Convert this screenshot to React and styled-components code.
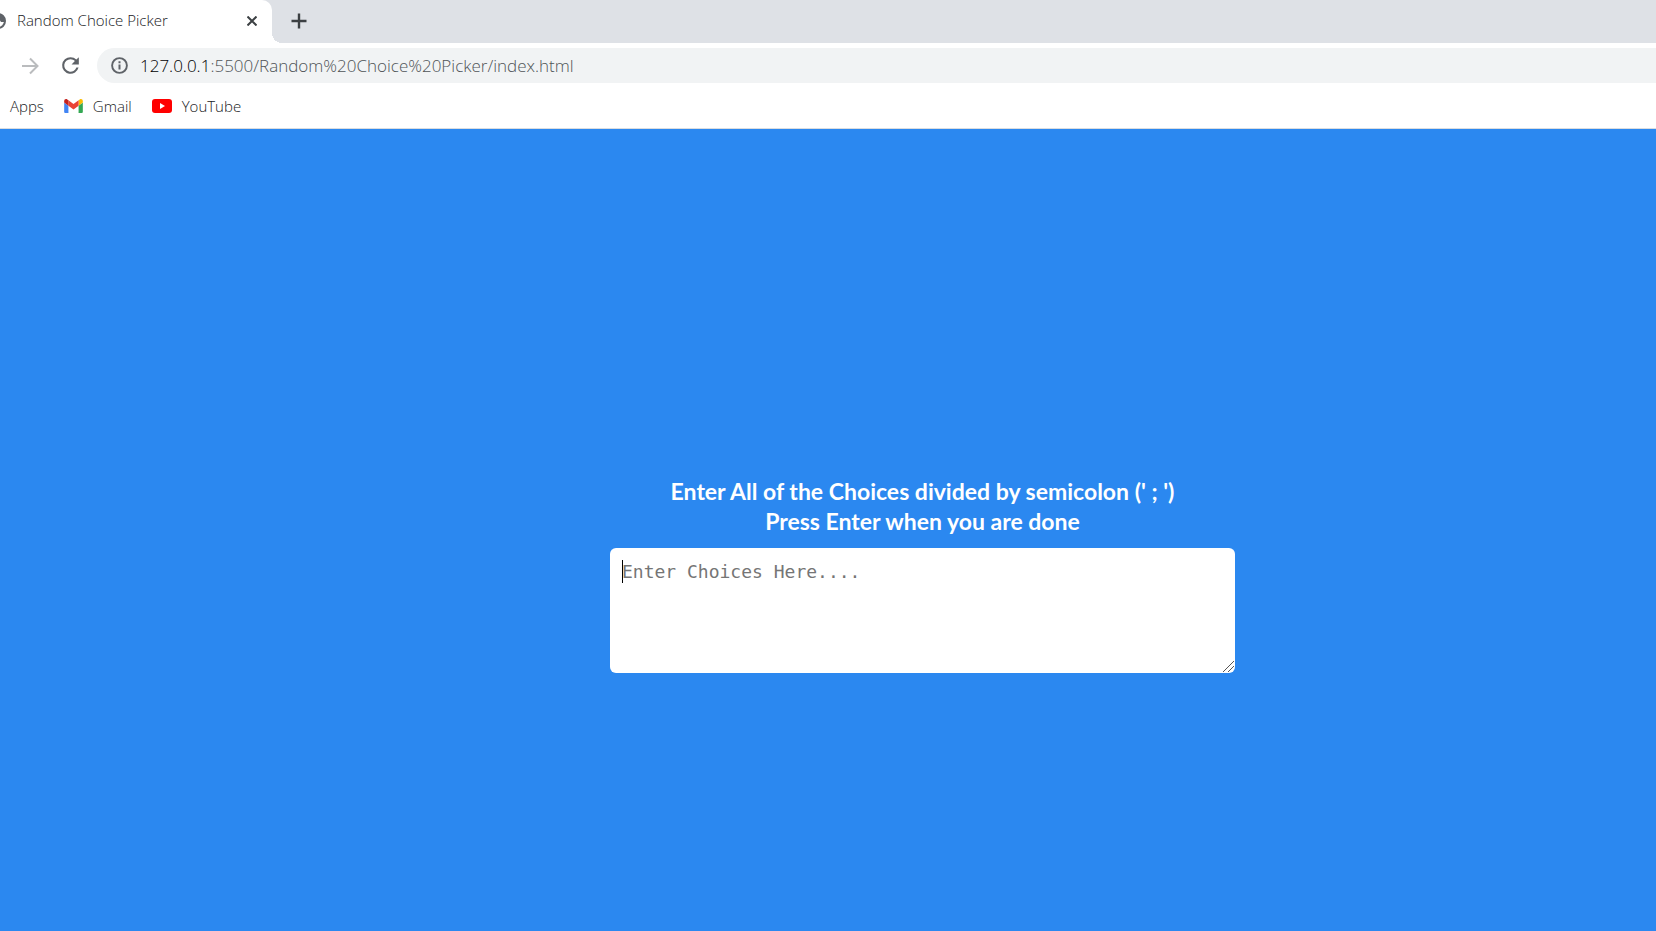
import React from "react";
import styled, { createGlobalStyle } from "styled-components";

const GlobalStyle = createGlobalStyle`
  *, *::before, *::after { box-sizing: border-box; }
  body {
    margin: 0;
    font-family: "Open Sans", "Noto Sans", sans-serif;
    color: #3c4043;
  }
  button, input { font: inherit; color: inherit; }
`;

const Window = styled.div`
  display: flex;
  flex-direction: column;
  min-height: 100vh;
  overflow: hidden;
  background: #fff;
`;

const TabStrip = styled.div`
  display: flex;
  align-items: center;
  height: 43px;
  padding-bottom: 1px;
  background: #dee1e6;
`;

const Tab = styled.div`
  position: relative;
  display: flex;
  align-items: center;
  align-self: flex-start;
  width: 272px;
  height: 43px;
  padding: 0 12px 1px 0;
  background: #fff;
  border-top-right-radius: 10px;

  &::after {
    content: "";
    position: absolute;
    left: 100%;
    bottom: 0;
    width: 10px;
    height: 10px;
    background: radial-gradient(circle at 100% 0, transparent 10px, #fff 10px);
  }
`;

const TabTitle = styled.span`
  flex: 1;
  padding: 0 0 2px 11px;
  font-size: 15px;
  font-weight: 300;
  line-height: 20px;
  color: #202124;
  white-space: nowrap;
`;

const IconButton = styled.button`
  display: flex;
  align-items: center;
  justify-content: center;
  flex: none;
  width: ${(p) => p.$size}px;
  height: ${(p) => p.$size}px;
  padding: 0;
  border: 0;
  border-radius: 50%;
  background: transparent;
  color: ${(p) => p.$tone || "#3c4043"};
`;

const NewTab = styled(IconButton)`
  margin-left: 13px;
`;

const Toolbar = styled.div`
  display: flex;
  align-items: center;
  gap: 8px;
  height: 45px;
  padding-left: 14px;
`;

const AddressBar = styled.div`
  display: flex;
  flex: 1;
  align-items: center;
  gap: 12px;
  height: 35px;
  margin-left: 3px;
  padding-left: 14px;
  border-radius: 18px 0 0 18px;
  background: #f1f3f4;
`;

const Url = styled.span`
  font-size: 17px;
  font-weight: 300;
  line-height: 24px;
  color: #4f5357;
  white-space: nowrap;
`;

const Host = styled.span`
  color: #000;
`;

const Bookmarks = styled.nav`
  display: flex;
  align-items: center;
  gap: 20px;
  height: 41px;
  padding: 0 10px 4px;
  border-bottom: 1px solid #d9dce0;
`;

const Bookmark = styled.a`
  display: flex;
  align-items: center;
  gap: 10px;
  font-size: 15px;
  font-weight: 300;
  line-height: 20px;
  color: #202124;
  text-decoration: none;
`;

const Page = styled.main`
  display: flex;
  flex: 1;
  flex-direction: column;
  align-items: center;
  justify-content: center;
  padding: 89px 0 0 189px;
  background: #2b88f0;
`;

const Picker = styled.div`
  display: flex;
  flex-direction: column;
  gap: 12px;
  width: 100%;
  max-width: 625px;
`;

const Heading = styled.label`
  font-family: Lato, sans-serif;
  font-size: 23px;
  font-weight: 700;
  line-height: 30px;
  text-align: center;
  color: #fff;
`;

const Field = styled.div`
  position: relative;
`;

const Choices = styled.textarea`
  display: block;
  width: 100%;
  height: 125px;
  padding: 12px;
  border: 0;
  border-radius: 6px;
  outline: none;
  background: #fff;
  caret-color: transparent;
  font-family: "DejaVu Sans Mono", monospace;
  font-size: 18px;
  line-height: 24px;
  color: #000;
  resize: none;

  &::placeholder { color: #757575; }
`;

const Caret = styled.span`
  position: absolute;
  top: 12px;
  left: 12px;
  width: 1px;
  height: 23px;
  background: #000;
  pointer-events: none;
`;

const Grip = styled.svg`
  position: absolute;
  right: 1px;
  bottom: 1px;
  pointer-events: none;
`;

const GlobeIcon = () => (
  <svg width="6" height="18" viewBox="0 0 6 18" aria-hidden="true">
    <circle cx="-2" cy="9" r="7" fill="#fff" stroke="#5f6368" strokeWidth="2" />
    <path d="M-2 2a7 7 0 0 1 7 8H1L-1 7V2z" fill="#5f6368" />
  </svg>
);

const CloseIcon = () => (
  <svg width="10" height="10" viewBox="0 0 10 10" aria-hidden="true">
    <path d="M.5.5l9 9M9.5.5l-9 9" stroke="currentColor" strokeWidth="2" />
  </svg>
);

const PlusIcon = () => (
  <svg width="16" height="16" viewBox="0 0 16 16" aria-hidden="true">
    <path d="M8 .5v15M.5 8h15" stroke="currentColor" strokeWidth="2.4" />
  </svg>
);

const ForwardIcon = () => (
  <svg width="18" height="18" viewBox="0 0 18 18" fill="none" aria-hidden="true">
    <path d="M1 9h15M9 1.5L16.5 9 9 16.5" stroke="currentColor" strokeWidth="2" />
  </svg>
);

const ReloadIcon = () => (
  <svg width="25" height="25" viewBox="0 0 24 24" aria-hidden="true">
    <path
      d="M17.65 6.35A7.96 7.96 0 0 0 12 4a8 8 0 1 0 7.73 10h-2.08A6 6 0 1 1 12 6c1.66 0 3.14.69 4.22 1.78L13 11h7V4z"
      fill="currentColor"
    />
  </svg>
);

const InfoIcon = () => (
  <svg width="17" height="17" viewBox="0 0 17 17" aria-hidden="true">
    <circle cx="8.5" cy="8.5" r="7.4" fill="none" stroke="#5f6368" strokeWidth="1.9" />
    <path d="M8.5 7.6v5M8.5 4.2v2" stroke="#5f6368" strokeWidth="2" />
  </svg>
);

const GmailIcon = () => (
  <svg width="19" height="14" viewBox="52 42 88 66" aria-hidden="true">
    <path fill="#4285f4" d="M58 108h14V74L52 59v43c0 3.32 2.69 6 6 6" />
    <path fill="#34a853" d="M120 108h14c3.32 0 6-2.69 6-6V59l-20 15" />
    <path fill="#fbbc04" d="M120 48v26l20-15v-8c0-7.42-8.47-11.65-14.4-7.2" />
    <path fill="#ea4335" d="M72 74V48l24 18 24-18v26L96 92" />
    <path fill="#c5221f" d="M52 51v8l20 15V48l-5.6-4.2C60.46 39.35 52 43.58 52 51" />
  </svg>
);

const YouTubeIcon = () => (
  <svg width="20" height="14" viewBox="0 0 20 14" aria-hidden="true">
    <rect width="20" height="14" rx="3" fill="#f00" />
    <path d="M8 4l5 3-5 3z" fill="#fff" />
  </svg>
);

export default function App() {
  return (
    <Window>
      <GlobalStyle />
      <header>
        <TabStrip>
          <Tab>
            <GlobeIcon />
            <TabTitle>Random Choice Picker</TabTitle>
            <IconButton type="button" $size={16} aria-label="Close tab">
              <CloseIcon />
            </IconButton>
          </Tab>
          <NewTab type="button" $size={28} aria-label="New tab">
            <PlusIcon />
          </NewTab>
        </TabStrip>
        <Toolbar>
          <IconButton type="button" $size={32} $tone="#babcbe" aria-label="Forward">
            <ForwardIcon />
          </IconButton>
          <IconButton type="button" $size={32} $tone="#5f6368" aria-label="Reload">
            <ReloadIcon />
          </IconButton>
          <AddressBar>
            <InfoIcon />
            <Url>
              <Host>127.0.0.1</Host>:5500/Random%20Choice%20Picker/index.html
            </Url>
          </AddressBar>
        </Toolbar>
        <Bookmarks aria-label="Bookmarks">
          <Bookmark href="#apps">Apps</Bookmark>
          <Bookmark href="#gmail">
            <GmailIcon />
            Gmail
          </Bookmark>
          <Bookmark href="#youtube">
            <YouTubeIcon />
            YouTube
          </Bookmark>
        </Bookmarks>
      </header>
      <Page>
        <Picker>
          <Heading htmlFor="choices">
            Enter All of the Choices divided by semicolon (' ; ')
            <br />
            Press Enter when you are done
          </Heading>
          <Field>
            <Choices id="choices" placeholder="Enter Choices Here...." autoFocus />
            <Caret />
            <Grip width="11" height="11" viewBox="0 0 11 11" aria-hidden="true">
              <path d="M0 11L11 0M5 11l6-6" stroke="#555" strokeWidth="1" />
            </Grip>
          </Field>
        </Picker>
      </Page>
    </Window>
  );
}
